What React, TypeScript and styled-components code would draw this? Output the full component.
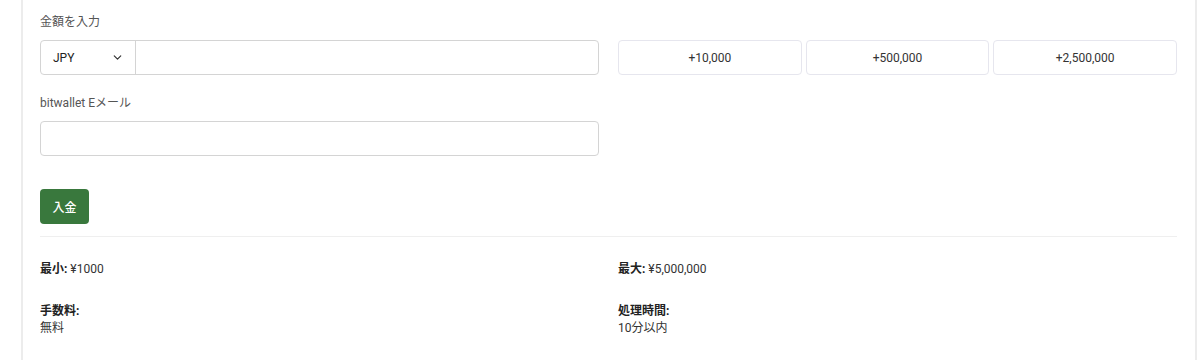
import React from "react";
import styled, { createGlobalStyle } from "styled-components";

const GlobalStyle = createGlobalStyle`
  body {
    margin: 0;
    background: #fff;
    font-family: Roboto, "Noto Sans CJK JP", sans-serif;
    color: #333;
  }
`;

const amounts = ["+10,000", "+500,000", "+2,500,000"];

const App = () => {
  return (
    <>
      <GlobalStyle />
      <Page>
        <Card>
          <FormGrid>
            <Field>
              <Label>金額を入力</Label>
              <InputGroup>
                <CurrencySelect>
                  <span>JPY</span>
                  <svg width="13" height="13" viewBox="0 0 24 24" fill="none" stroke="#333" strokeWidth="2.2" strokeLinecap="round" strokeLinejoin="round">
                    <path d="M6 9l6 6 6-6" />
                  </svg>
                </CurrencySelect>
                <AmountInput />
              </InputGroup>
            </Field>
            <QuickRow>
              {amounts.map(a => <QuickButton key={a}>{a}</QuickButton>)}
            </QuickRow>
            <Field>
              <Label>bitwallet Eメール</Label>
              <TextInput />
            </Field>
          </FormGrid>
          <SubmitButton>入金</SubmitButton>
          <Divider />
          <InfoGrid>
            <InfoItem><b>最小:</b> ¥1000</InfoItem>
            <InfoItem><b>最大:</b> ¥5,000,000</InfoItem>
            <InfoItem><b>手数料:</b><br />無料</InfoItem>
            <InfoItem><b>処理時間:</b><br />10分以内</InfoItem>
          </InfoGrid>
        </Card>
      </Page>
    </>
  );
};

export default App;

const Page = styled.div`
  height: 360px;
  padding: 0 3px 0 21px;
  box-sizing: border-box;
`;

const Card = styled.div`
  height: 100%;
  box-sizing: border-box;
  border-left: 2px solid #ececec;
  border-right: 2px solid #ececec;
  padding: 14px 18px 0 17px;
`;

const FormGrid = styled.div`
  display: grid;
  grid-template-columns: 559px 1fr;
  column-gap: 19px;
  row-gap: 20px;
  align-items: end;
`;

const Field = styled.div`
  display: flex;
  flex-direction: column;
`;

const Label = styled.label`
  font-size: 12px;
  color: #555;
  margin-bottom: 9px;
  line-height: 17px;
`;

const InputGroup = styled.div`
  display: flex;
  height: 35px;
  border: 1px solid #d4d4d4;
  border-radius: 4px;
  box-sizing: border-box;
  overflow: hidden;
`;

const CurrencySelect = styled.div`
  width: 95px;
  display: flex;
  align-items: center;
  justify-content: space-between;
  padding: 0 11px 0 12px;
  box-sizing: border-box;
  border-right: 1px solid #d4d4d4;
  font-size: 12px;
  color: #222;
`;

const AmountInput = styled.div`
  flex: 1;
`;

const TextInput = styled.div`
  height: 35px;
  border: 1px solid #d4d4d4;
  border-radius: 4px;
  box-sizing: border-box;
`;

const QuickRow = styled.div`
  display: grid;
  grid-template-columns: repeat(3, 1fr);
  gap: 4px;
`;

const QuickButton = styled.div`
  height: 35px;
  display: flex;
  align-items: center;
  justify-content: center;
  border: 1px solid #e6e6ee;
  border-radius: 4px;
  box-sizing: border-box;
  font-size: 12px;
  color: #333;
`;

const SubmitButton = styled.button`
  margin-top: 33px;
  height: 35px;
  width: 49px;
  border: none;
  border-radius: 4px;
  background: #39783d;
  color: #fff;
  font-family: inherit;
  font-size: 12px;
  font-weight: 500;
  padding: 0;
  display: block;
`;

const Divider = styled.hr`
  border: none;
  border-top: 1px solid #efefef;
  margin: 12px 0 0 0;
`;

const InfoGrid = styled.div`
  display: grid;
  grid-template-columns: 559px 1fr;
  column-gap: 19px;
  row-gap: 25px;
  padding-top: 24px;
`;

const InfoItem = styled.div`
  font-size: 12px;
  line-height: 17px;
  color: #333;

  b {
    color: #222;
    font-weight: 700;
  }
`;
